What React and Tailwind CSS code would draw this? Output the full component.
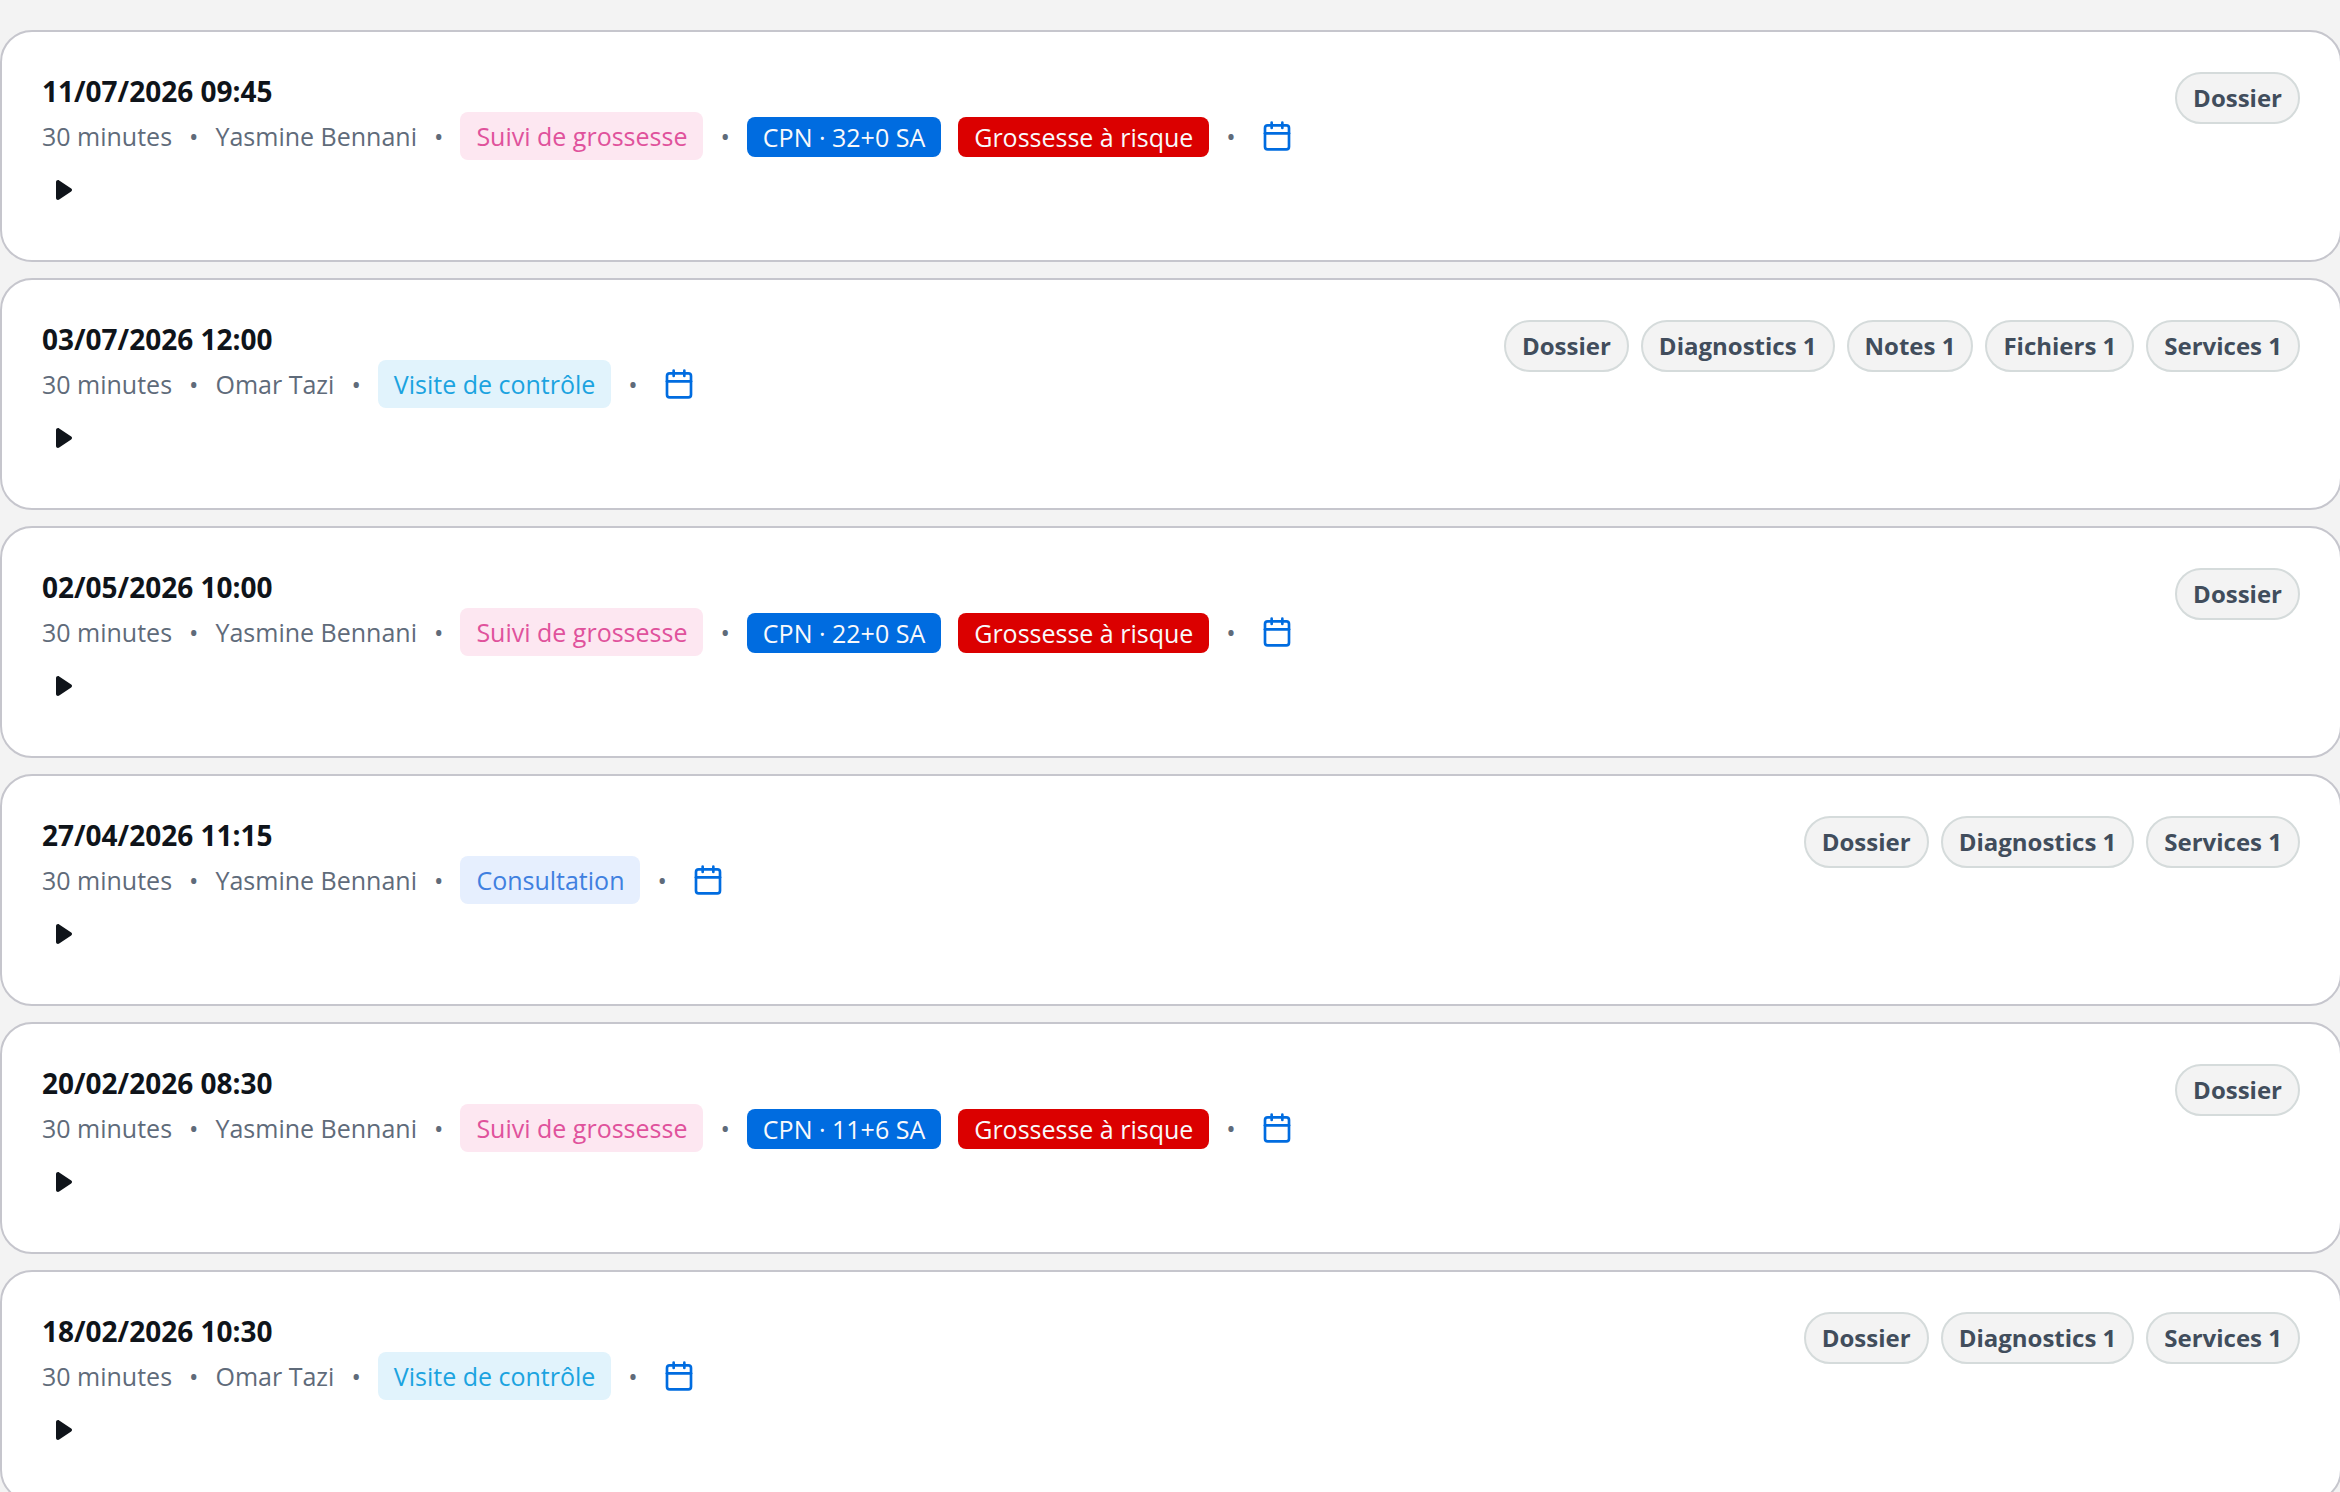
import React, { Fragment } from 'react';
import { Calendar } from 'lucide-react';

const typeStyles = {
  'Suivi de grossesse': 'bg-[#fde7f1] text-[#e0529c]',
  'Visite de contrôle': 'bg-[#e1f3fc] text-[#1ba3e0]',
  Consultation: 'bg-[#e6effe] text-[#4080e0]',
};

const appointments = [
  { date: '11/07/2026 09:45', doctor: 'Yasmine Bennani', type: 'Suivi de grossesse', term: 'CPN · 32+0 SA', risk: true, sections: ['Dossier'] },
  { date: '03/07/2026 12:00', doctor: 'Omar Tazi', type: 'Visite de contrôle', sections: ['Dossier', 'Diagnostics 1', 'Notes 1', 'Fichiers 1', 'Services 1'] },
  { date: '02/05/2026 10:00', doctor: 'Yasmine Bennani', type: 'Suivi de grossesse', term: 'CPN · 22+0 SA', risk: true, sections: ['Dossier'] },
  { date: '27/04/2026 11:15', doctor: 'Yasmine Bennani', type: 'Consultation', sections: ['Dossier', 'Diagnostics 1', 'Services 1'] },
  { date: '20/02/2026 08:30', doctor: 'Yasmine Bennani', type: 'Suivi de grossesse', term: 'CPN · 11+6 SA', risk: true, sections: ['Dossier'] },
  { date: '18/02/2026 10:30', doctor: 'Omar Tazi', type: 'Visite de contrôle', sections: ['Dossier', 'Diagnostics 1', 'Services 1'] },
];

const Dot = () => <span>•</span>;

const Badge = ({ className, children }) => (
  <span className={`mt-0.5 rounded-lg px-4 leading-10 text-[#f9f9fb] ${className}`}>{children}</span>
);

const AppointmentCard = ({ date, doctor, type, term, risk, sections }) => (
  <article className="flex items-start justify-between rounded-[32px] border-2 border-[#c6c6cd] bg-white p-10">
    <div>
      <h3 className="mb-0.5 text-[28px] leading-[38px] font-bold text-[#0f141a]">{date}</h3>
      <div className="flex h-12 items-center gap-[17px] text-[25px] leading-10 text-[#5f6b7a]">
        <span>30 minutes</span>
        <Dot />
        <span>{doctor}</span>
        <Dot />
        <span className={`rounded-lg px-4 py-1 ${typeStyles[type]}`}>{type}</span>
        <Dot />
        {term && (
          <Fragment>
            <Badge className="bg-[#006ce0]">{term}</Badge>
            {risk && <Badge className="bg-[#db0000]">Grossesse à risque</Badge>}
            <Dot />
          </Fragment>
        )}
        <button type="button" aria-label="Calendrier" className="p-2 text-[#006ce0]">
          <Calendar className="size-8" />
        </button>
      </div>

      {/* Expand toggle */}
      <button type="button" aria-label="Afficher les détails" className="flex h-15 items-center px-3.5 text-[#0f141a]">
        <svg viewBox="0 0 16 20" className="h-5 w-4" fill="currentColor">
          <path d="M0 2C0 .3 1.9-.5 3.2.4L15.2 8.6C16.3 9.4 16.3 10.6 15.2 11.4L3.2 19.6C1.9 20.5 0 19.7 0 18Z" />
        </svg>
      </button>
    </div>

    <div className="flex gap-3">
      {sections.map((section) => (
        <button
          key={section}
          type="button"
          className="rounded-full border-2 border-[#d5dbdb] bg-[#f3f3f3] px-4 py-1 text-2xl leading-10 font-bold text-[#414d5c]"
        >
          {section}
        </button>
      ))}
    </div>
  </article>
);

const App = () => {
  return (
    <main className="h-screen overflow-hidden bg-[#f3f3f3] pt-[30px] font-['Open_Sans',sans-serif]">
      <div className="-mr-0.5 flex flex-col gap-4">
        {appointments.map((appointment) => (
          <AppointmentCard key={appointment.date} {...appointment} />
        ))}
      </div>
    </main>
  );
};

export default App;
